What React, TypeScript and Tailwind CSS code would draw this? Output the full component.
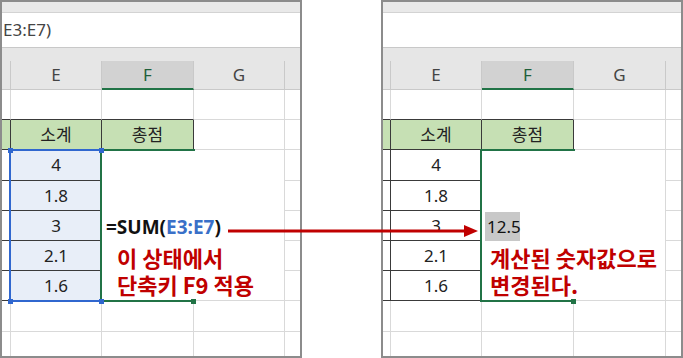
import React from "react";

const LIGHT = "border-[#d9d9d9]";

function Panel({ left }: { left: boolean }) {
  const w = left
    ? ["w-[9px]", "w-[91px]", "w-[92px]", "w-[91px]"]
    : ["w-[8px]", "w-[91px]", "w-[92px]", "w-[92px]"];
  const nums = ["4", "1.8", "3", "2.1", "1.6"];
  const dataH = ["h-[31px]", "h-[30px]", "h-[30px]", "h-[30px]", "h-[30px]"];
  const eBg = left ? "bg-[#e8eef8]" : "bg-white";
  return (
    <div className="relative w-[302px] h-[358px] shrink-0 border-2 border-[#8c8c8c] flex flex-col overflow-hidden bg-white font-['Noto_Sans','Noto_Sans_CJK_KR',sans-serif] text-[#222]">
      <div className="h-[11px] shrink-0 bg-[#e9e9e9] border-b border-[#d3d3d3]" />
      <div className="h-[35px] shrink-0 bg-white border-b border-[#c8c8c8] flex items-center pl-[1px] text-[17px] text-[#444]">
        {left ? "E3:E7)" : ""}
      </div>
      <div className="h-[13px] shrink-0 bg-[#e6e6e6]" />
      {/* column header */}
      <div className="h-[29px] shrink-0 flex bg-[#e6e6e6] text-[17px] text-[#444]">
        <div className={`${w[0]} border-r border-b border-[#c9c9c9]`} />
        <div className={`${w[1]} border-r border-b border-[#c9c9c9] flex items-center justify-center`}>E</div>
        <div className={`${w[2]} bg-[#d2d2d2] border-r border-r-[#c9c9c9] border-b-2 border-b-[#217346] flex items-center justify-center text-[#1f5f3a]`}>F</div>
        <div className={`${w[3]} border-r border-b border-[#c9c9c9] flex items-center justify-center`}>G</div>
        <div className="flex-1 border-b border-[#c9c9c9]" />
      </div>
      {/* row 1 */}
      <div className="h-[30px] shrink-0 flex">
        <div className={`${w[0]} border-r border-b border-r-[#d9d9d9] border-b-[#3a3a3a]`} />
        <div className={`${w[1]} border-r border-b border-r-[#d9d9d9] border-b-[#3a3a3a]`} />
        <div className={`${w[2]} border-r border-b border-r-[#d9d9d9] border-b-[#3a3a3a]`} />
        <div className={`${w[3]} border-r border-b ${LIGHT}`} />
        <div className={`flex-1 border-b ${LIGHT}`} />
      </div>
      {/* row 2 header */}
      <div className="h-[30px] shrink-0 flex text-[17px]">
        <div className={`${w[0]} bg-[#c6e0b4] border-r border-b border-[#3a3a3a]`} />
        <div className={`${w[1]} bg-[#c6e0b4] border-r border-b border-[#3a3a3a] flex items-center justify-center`}>소계</div>
        <div className={`${w[2]} bg-[#c6e0b4] border-r border-b border-[#3a3a3a] flex items-center justify-center`}>총점</div>
        <div className={`${w[3]} border-r border-b ${LIGHT}`} />
        <div className={`flex-1 border-b ${LIGHT}`} />
      </div>
      {/* data rows */}
      {nums.map((n, i) => (
        <div key={n} className={`${dataH[i]} shrink-0 flex text-[17px]`}>
          <div className={`${w[0]} border-r border-b border-[#3a3a3a]`} />
          <div className={`${w[1]} ${eBg} border-r border-b border-[#3a3a3a] flex items-center justify-center`}>{n}</div>
          <div className={`${w[2]} ${i === 2 && !left ? "pl-[3px] pt-[1px]" : ""}`}>
            {i === 2 && !left ? (
              <div className="w-[35px] h-full bg-[#c8c8c8] flex items-center pl-[2px] text-[#111]">12.5</div>
            ) : null}
          </div>
          <div className={`${w[3]} border-r ${i === 4 ? "border-b" : ""} ${LIGHT}`} />
          <div className={`flex-1 border-b ${LIGHT}`} />
        </div>
      ))}
      {/* row 8 */}
      <div className="h-[31px] shrink-0 flex">
        <div className={`${w[0]} border-r border-b ${LIGHT}`} />
        <div className={`${w[1]} border-r border-b ${LIGHT}`} />
        <div className={`${w[2]} border-r border-b ${LIGHT}`} />
        <div className={`${w[3]} border-r border-b ${LIGHT}`} />
        <div className={`flex-1 border-b ${LIGHT}`} />
      </div>
      {/* row 9 */}
      <div className="flex-1 flex">
        <div className={`${w[0]} border-r ${LIGHT}`} />
        <div className={`${w[1]} border-r ${LIGHT}`} />
        <div className={`${w[2]} border-r ${LIGHT}`} />
        <div className={`${w[3]} border-r ${LIGHT}`} />
        <div className="flex-1" />
      </div>

      {/* selection overlays */}
      {left ? (
        <>
          <div className="absolute left-[7px] top-[147px] w-[93px] h-[153px] border-2 border-[#3067cf]" />
          <div className="absolute left-[98px] top-[147px] w-[95px] h-[153px] border-l-2 border-t-2 border-b-2 border-[#217346]" />
          <div className="absolute left-[6px] top-[146px] w-[5px] h-[5px] bg-[#3067cf]" />
          <div className="absolute left-[97px] top-[146px] w-[5px] h-[5px] bg-[#3067cf]" />
          <div className="absolute left-[6px] top-[297px] w-[5px] h-[5px] bg-[#3067cf]" />
          <div className="absolute left-[97px] top-[297px] w-[5px] h-[5px] bg-[#3067cf]" />
          <div className="absolute left-[189px] top-[297px] w-[5px] h-[5px] bg-[#217346]" />
        </>
      ) : (
        <>
          <div className="absolute left-[97px] top-[147px] w-[95px] h-[153px] border-l-2 border-t-2 border-b-2 border-[#217346]" />
          <div className="absolute left-[188px] top-[297px] w-[5px] h-[5px] bg-[#217346]" />
        </>
      )}
    </div>
  );
}

export default function App() {
  return (
    <div className="relative w-[683px] h-[358px] bg-white overflow-hidden">
      <div className="flex gap-[79px]">
        <Panel left />
        <Panel left={false} />
      </div>

      {/* formula text */}
      <div className="absolute left-[106px] top-[214px] leading-[27px] text-[19px] font-bold font-['Noto_Sans',sans-serif] text-[#111] whitespace-nowrap">
        =SUM(<span className="text-[#3a70c8]">E3:E7</span>)
      </div>

      {/* arrow */}
      <svg className="absolute left-[226px] top-[222px]" width="256" height="18" viewBox="0 0 256 18">
        <line x1="2" y1="9" x2="240" y2="9" stroke="#c00000" strokeWidth="3" />
        <polygon points="238,3 252,9 238,15" fill="#c00000" />
      </svg>

      {/* annotations */}
      <div className="absolute left-[117px] top-[244px] flex flex-col text-[22px] font-bold text-[#c00000] font-['Noto_Sans_CJK_KR',sans-serif] whitespace-nowrap">
        <div className="h-[27px] leading-[27px]">이 상태에서</div>
        <div className="h-[27px] leading-[27px]">단축키 F9 적용</div>
      </div>
      <div className="absolute left-[490px] top-[244px] flex flex-col text-[22px] font-bold text-[#c00000] font-['Noto_Sans_CJK_KR',sans-serif] whitespace-nowrap">
        <div className="h-[27px] leading-[27px]">계산된 숫자값으로</div>
        <div className="h-[27px] leading-[27px]">변경된다.</div>
      </div>
    </div>
  );
}
